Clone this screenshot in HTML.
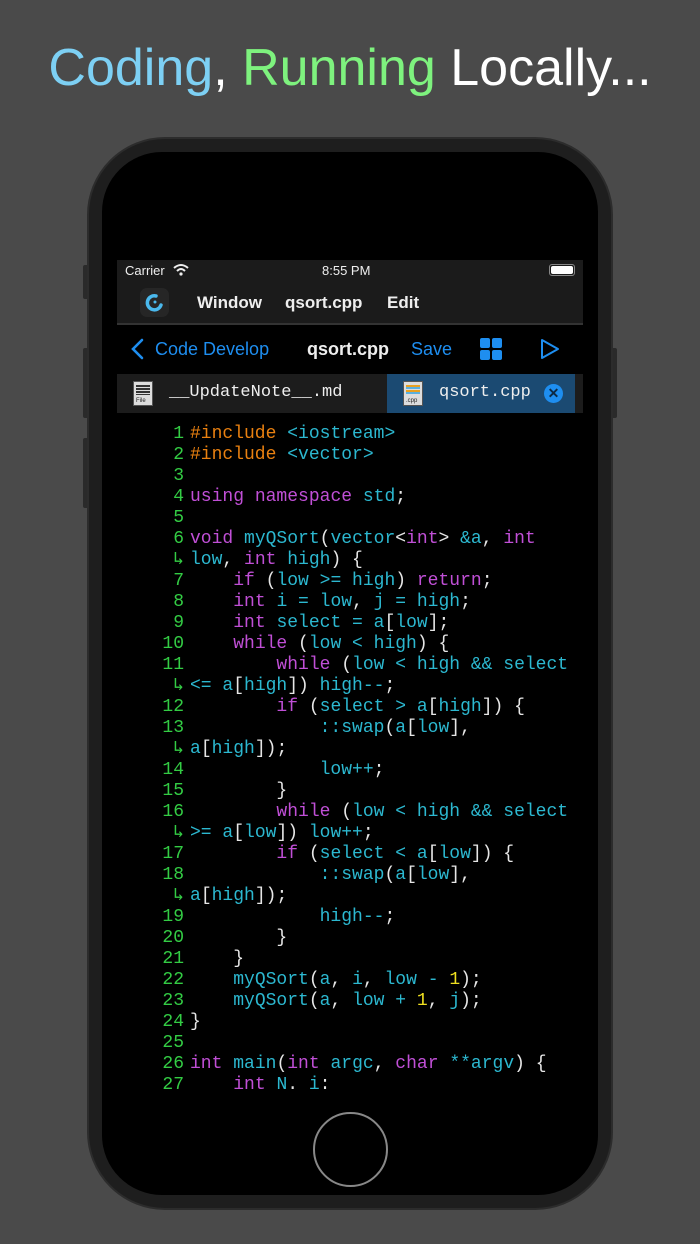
<!DOCTYPE html>
<html><head><meta charset="utf-8"><style>
*{margin:0;padding:0;box-sizing:border-box}
body{width:700px;height:1244px;background:#4a4a4a;position:relative;overflow:hidden;font-family:"Liberation Sans",sans-serif}
.title{position:absolute;top:38px;left:0;width:700px;text-align:center;font-size:52px;color:#fff;letter-spacing:0px}
.phone{position:absolute;left:87px;top:137px;width:526px;height:1073px;border-radius:78px;background:#1e1e1e;border:2px solid #2c2c2c}
.btn{position:absolute;background:#2a2a2a;width:6px;border-radius:2px}
.scr{position:absolute;left:102px;top:152px;width:496px;height:1043px;border-radius:60px;background:#000;overflow:hidden}
.a{position:absolute}
.code{position:absolute;left:117px;top:424px;width:466px;height:668px;overflow:hidden;font-family:"Liberation Mono",monospace;font-size:18px;line-height:21px;color:#e6e6e6;white-space:pre}
.n{display:inline-block;width:73px;text-align:right;color:#33cc44;padding-right:6px}
.k{color:#c04fd6}.i{color:#2cb8d0}.o{color:#e98010}.y{color:#f0e020}
</style></head><body>
<div class="title"><span style="color:#7dd0f4">Coding</span>, <span style="color:#7ef27e">Running</span> Locally...</div>
<div class="btn" style="left:83px;top:265px;height:34px"></div>
<div class="btn" style="left:83px;top:348px;height:70px"></div>
<div class="btn" style="left:83px;top:438px;height:70px"></div>
<div class="btn" style="left:611px;top:348px;height:70px"></div>
<div class="phone"></div>
<div class="scr"></div>
<div class="a" style="left:117px;top:260px;width:466px;height:64px;background:#1b1b1b"></div>
<div class="a" style="left:117px;top:323px;width:466px;height:2px;background:#333"></div>
<div class="a" style="left:125px;top:263px;font-size:13px;color:#eee">Carrier</div>
<svg class="a" style="left:173px;top:263px" width="16" height="13" viewBox="0 0 16 13"><path d="M1 5 Q8 -1 15 5" stroke="#eee" stroke-width="2" fill="none"/><path d="M4 8 Q8 4 12 8" stroke="#eee" stroke-width="2" fill="none"/><circle cx="8" cy="11" r="1.6" fill="#eee"/></svg>
<div class="a" style="left:322px;top:263px;font-size:13px;color:#eee">8:55 PM</div>
<div class="a" style="left:549px;top:264px;width:26px;height:12px;border:1px solid #888;border-radius:3px;padding:1px"><div style="width:100%;height:100%;background:#fff;border-radius:2px"></div></div>
<div class="a" style="left:140px;top:288px;width:29px;height:29px;background:#262626;border-radius:7px"></div>
<svg class="a" style="left:143px;top:291px" width="23" height="23" viewBox="0 0 23 23"><path d="M13 5 A7 7 0 1 0 18 14" stroke="#4ab8ec" stroke-width="3.5" fill="none" stroke-linecap="round"/><circle cx="12" cy="11" r="1.5" fill="#4ab8ec"/></svg>
<div class="a" style="left:197px;top:293px;font-size:17px;font-weight:bold;color:#eee">Window</div>
<div class="a" style="left:285px;top:293px;font-size:17px;font-weight:bold;color:#eee">qsort.cpp</div>
<div class="a" style="left:387px;top:293px;font-size:17px;font-weight:bold;color:#eee">Edit</div>
<svg class="a" style="left:130px;top:338px" width="16" height="22" viewBox="0 0 16 22"><path d="M12 2 L3 11 L12 20" stroke="#1e8ef0" stroke-width="2.6" fill="none" stroke-linecap="round"/></svg>
<div class="a" style="left:155px;top:339px;font-size:18px;color:#1e8ef0">Code Develop</div>
<div class="a" style="left:307px;top:339px;font-size:18px;font-weight:bold;color:#eee">qsort.cpp</div>
<div class="a" style="left:411px;top:339px;font-size:18px;color:#1e8ef0">Save</div>
<svg class="a" style="left:480px;top:338px" width="22" height="22"><rect x="0" y="0" width="10" height="10" rx="2" fill="#1e8ef0"/><rect x="12" y="0" width="10" height="10" rx="2" fill="#1e8ef0"/><rect x="0" y="12" width="10" height="10" rx="2" fill="#1e8ef0"/><rect x="12" y="12" width="10" height="10" rx="2" fill="#1e8ef0"/></svg>
<svg class="a" style="left:540px;top:338px" width="20" height="22"><path d="M2 2 L18 11 L2 20 Z" stroke="#1e8ef0" stroke-width="2" fill="none" stroke-linejoin="round"/></svg>
<div class="a" style="left:117px;top:374px;width:466px;height:39px;background:#1c1c1c"></div>
<div class="a" style="left:387px;top:374px;width:188px;height:39px;background:#1b4a72"></div>
<div class="a" style="left:133px;top:381px;width:20px;height:25px;background:#ddd;border:1px solid #555"><div style="margin:3px 2px;height:10px;background:repeating-linear-gradient(#333 0 2px,#ddd 2px 3px)"></div><div style="font-size:6px;color:#222;margin-left:2px">File</div></div>
<div class="a" style="left:169px;top:383px;font-family:'Liberation Mono',monospace;font-size:17px;color:#eee">__UpdateNote__.md</div>
<div class="a" style="left:403px;top:381px;width:20px;height:25px;background:#ddd;border:1px solid #555"><div style="margin:3px 2px;height:10px;background:repeating-linear-gradient(#e9a020 0 2px,#5ab0e0 2px 4px,#ddd 4px 5px)"></div><div style="font-size:6px;color:#222;margin-left:2px">.cpp</div></div>
<div class="a" style="left:439px;top:383px;font-family:'Liberation Mono',monospace;font-size:17px;color:#eee">qsort.cpp</div>
<div class="a" style="left:544px;top:384px;width:19px;height:19px;border-radius:50%;background:#1e8ef0;color:#0d2a44;font-size:14px;line-height:19px;text-align:center;font-weight:bold">✕</div>
<div class="code"><span class="n">1</span><span class="o">#include</span> <span class="i">&lt;iostream&gt;</span>
<span class="n">2</span><span class="o">#include</span> <span class="i">&lt;vector&gt;</span>
<span class="n">3</span>
<span class="n">4</span><span class="k">using</span> <span class="k">namespace</span> <span class="i">std</span>;
<span class="n">5</span>
<span class="n">6</span><span class="k">void</span> <span class="i">myQSort</span>(<span class="i">vector</span>&lt;<span class="k">int</span>&gt; <span class="i">&amp;a</span>, <span class="k">int</span>
<span class="n">↳</span><span class="i">low</span>, <span class="k">int</span> <span class="i">high</span>) {
<span class="n">7</span>    <span class="k">if</span> (<span class="i">low &gt;= high</span>) <span class="k">return</span>;
<span class="n">8</span>    <span class="k">int</span> <span class="i">i = low</span>, <span class="i">j = high</span>;
<span class="n">9</span>    <span class="k">int</span> <span class="i">select = a</span>[<span class="i">low</span>];
<span class="n">10</span>    <span class="k">while</span> (<span class="i">low &lt; high</span>) {
<span class="n">11</span>        <span class="k">while</span> (<span class="i">low &lt; high &amp;&amp; select</span>
<span class="n">↳</span><span class="i">&lt;= a</span>[<span class="i">high</span>]) <span class="i">high--</span>;
<span class="n">12</span>        <span class="k">if</span> (<span class="i">select &gt; a</span>[<span class="i">high</span>]) {
<span class="n">13</span>            <span class="i">::swap</span>(<span class="i">a</span>[<span class="i">low</span>],
<span class="n">↳</span><span class="i">a</span>[<span class="i">high</span>]);
<span class="n">14</span>            <span class="i">low++</span>;
<span class="n">15</span>        }
<span class="n">16</span>        <span class="k">while</span> (<span class="i">low &lt; high &amp;&amp; select</span>
<span class="n">↳</span><span class="i">&gt;= a</span>[<span class="i">low</span>]) <span class="i">low++</span>;
<span class="n">17</span>        <span class="k">if</span> (<span class="i">select &lt; a</span>[<span class="i">low</span>]) {
<span class="n">18</span>            <span class="i">::swap</span>(<span class="i">a</span>[<span class="i">low</span>],
<span class="n">↳</span><span class="i">a</span>[<span class="i">high</span>]);
<span class="n">19</span>            <span class="i">high--</span>;
<span class="n">20</span>        }
<span class="n">21</span>    }
<span class="n">22</span>    <span class="i">myQSort</span>(<span class="i">a</span>, <span class="i">i</span>, <span class="i">low - </span><span class="y">1</span>);
<span class="n">23</span>    <span class="i">myQSort</span>(<span class="i">a</span>, <span class="i">low + </span><span class="y">1</span>, <span class="i">j</span>);
<span class="n">24</span>}
<span class="n">25</span>
<span class="n">26</span><span class="k">int</span> <span class="i">main</span>(<span class="k">int</span> <span class="i">argc</span>, <span class="k">char</span> <span class="i">**argv</span>) {
<span class="n">27</span>    <span class="k">int</span> <span class="i">N</span>. <span class="i">i</span>:
</div>
<div class="a" style="left:313px;top:1112px;width:75px;height:75px;border-radius:50%;border:2px solid #888"></div>
</body></html>
